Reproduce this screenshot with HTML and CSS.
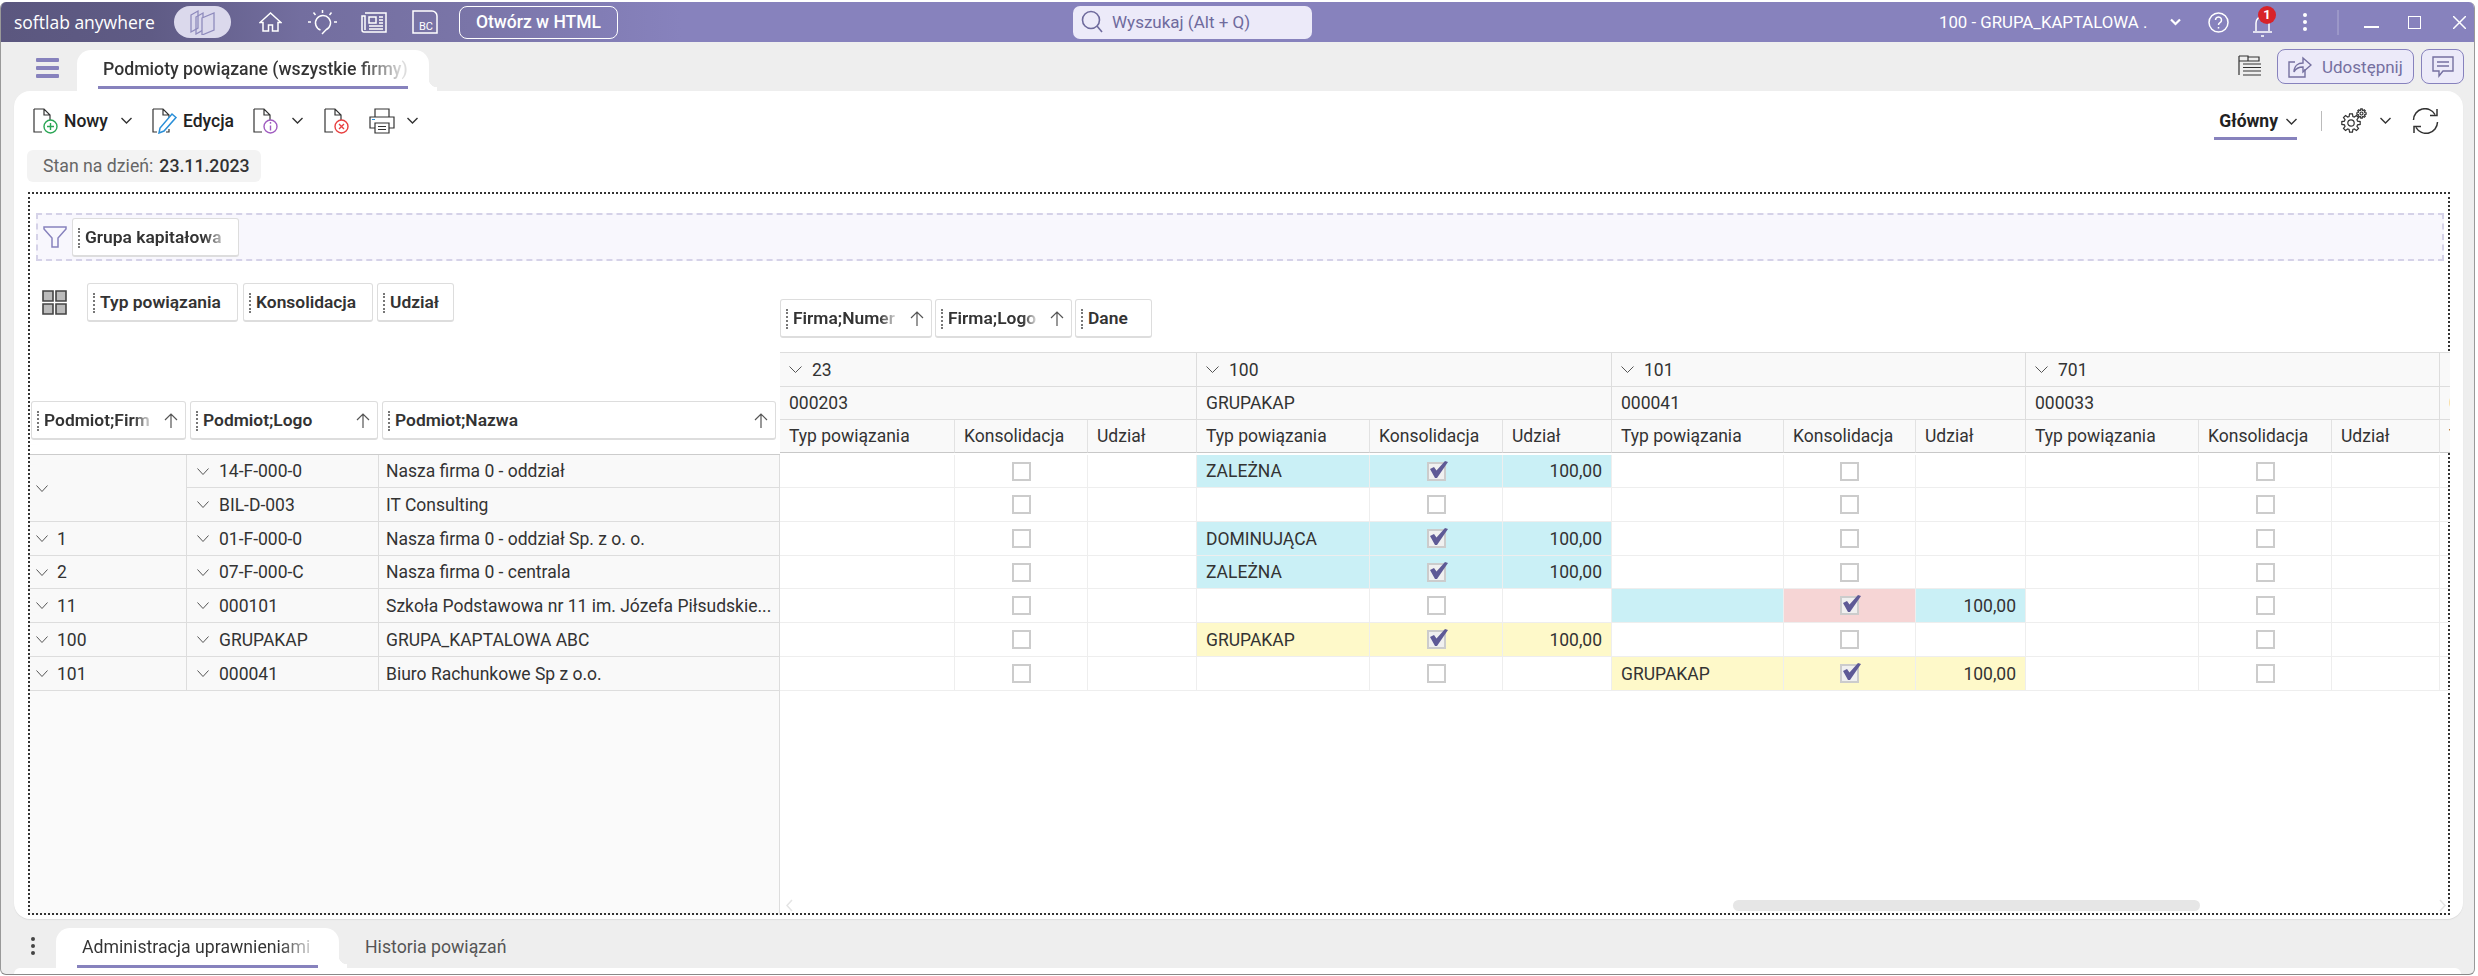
FILE: index.html
```
<!DOCTYPE html>
<html lang="pl">
<head>
<meta charset="utf-8">
<title>Podmioty powiązane</title>
<link rel="stylesheet" href="styles.css">
</head>
<body>
<div class="window">
  <header class="titlebar">
    <span class="brand">softlab anywhere</span>
    <span class="pill"><svg width="26" height="26" viewBox="0 0 26 26" class="ln-pur"><path d="M1 6l7-4v17l-7 4z"/><path d="M6 8l7-4v17l-7 4z"/><path d="M12 9l12-5v17l-12 5z" fill="#dbd9ec"/></svg></span>
    <svg class="t-home ln-w" width="23" height="20" viewBox="0 0 23 20"><path d="M11.5 1L1 10.5h3V19h5.5v-6h4v6H19v-8.5h3z"/></svg>
    <svg class="t-bulb ln-w" width="29" height="26" viewBox="0 0 29 26"><path d="M12.5 21A7.5 7.5 0 1 1 18 20.8L14 25"/><path d="M14.5 1v3M5.5 3.5l2 2.500M23.500 3.500l-2 2.500M0 13h3M26 13h3"/></svg>
    <svg class="t-news ln-w" width="26" height="21" viewBox="0 0 26 21"><path d="M4 1h21v19H3a2 2 0 0 1-2-2V4h3v14"/><path d="M8 5h7v6H8zM18 5h4M18 8h4M18 11h4M8 14h14M8 17h14"/></svg>
    <svg class="t-bc ln-w" width="26" height="24" viewBox="0 0 26 24"><path d="M1 1h19a5 5 0 0 1 5 5v17H1z"/><text x="7" y="20" class="bc-text">BC</text></svg>
    <span class="html-btn">Otwórz w HTML</span>
    <div class="search">
      <svg width="22" height="24" viewBox="0 0 22 24" class="ln-search"><circle cx="10" cy="10" r="8.500"/><path d="M16 16l5 6"/></svg>
      <span>Wyszukaj (Alt + Q)</span>
    </div>
    <span class="company">100 - GRUPA_KAPTALOWA .</span>
    <svg class="t-cchev" width="11" height="8" viewBox="0 0 11 8"><path d="M1 1.500l4.500 4.500 4.500-4.500"/></svg>
    <svg class="t-help ln-w" width="21" height="21" viewBox="0 0 21 21"><circle cx="10.500" cy="10.500" r="9.500"/><path d="M7.500 8a3 3 0 1 1 4.500 2.600c-1 .6-1.500 1.200-1.500 2.400M10.500 15v1.500"/></svg>
    <span class="bell">
      <svg class="ln-w" width="19" height="23" viewBox="0 0 19 23"><path d="M3 17V9a6.500 6.500 0 0 1 13 0v8M0 18h19M8 22h3"/></svg>
      <span class="badge">1</span>
    </span>
    <span class="vdots"><i></i><i></i><i></i></span>
    <span class="t-sep"></span>
    <span class="t-min"></span>
    <span class="t-max"></span>
    <svg class="t-close ln-w" width="13" height="13" viewBox="0 0 13 13"><path d="M0 0l13 13M13 0L0 13"/></svg>
  </header>

  <div class="tabstrip">
    <span class="burger"><i></i><i></i><i></i></span>
    <div class="tab tab-main"><span class="tab-text fade">Podmioty powiązane (wszystkie firmy)</span></div>
    <svg class="flaglist" width="23" height="22" viewBox="0 0 23 22"><path class="dk" d="M1 1v19M1 1h9v5H1M10 2h11v4H10M5 9h18M5 12.500h18M5 16h18M5 20h18"/></svg>
    <span class="share-btn">
      <svg width="24" height="24" viewBox="0 0 24 24" class="ln-mut"><path d="M17 14v8H1V7h6"/><path d="M6 17c0-6 4-9 9-9V3l8 7-8 7v-5c-4 0-7 1-9 5z"/></svg>
      <span>Udostępnij</span>
    </span>
    <span class="comment-btn">
      <svg width="22" height="22" viewBox="0 0 22 22" class="ln-mut"><path d="M1 1h20v14H11l-4 5v-5H1zM5 6h12M5 10h12"/></svg>
    </span>
  </div>

  <main class="panel">
    <div class="toolbar">
      <svg class="i-new" width="25" height="26" viewBox="0 0 25 26"><path class="dk" d="M1 1h10l6 6v5M11 1v6h6M1 1v23h8"/><circle cx="17.500" cy="18.500" r="6.500" fill="#fff" stroke="#2aa655" stroke-width="1.400"/><path d="M17.500 15v7M14 18.500h7" stroke="#2aa655" stroke-width="1.400"/></svg>
      <span class="tb-label tb-nowy">Nowy</span>
      <svg class="chev c-nowy" width="11" height="7" viewBox="0 0 11 7"><path d="M.5 1l5 5 5-5"/></svg>
      <svg class="i-edit" width="26" height="26" viewBox="0 0 26 26"><path class="dk" d="M1 1h10l6 6v4M11 1v6h6M1 1v23h4M14 24h3v-3"/><path d="M20 6l4 3.500L12 23l-5 2 1-5z" fill="#fff" stroke="#2a8fd8" stroke-width="1.500"/></svg>
      <span class="tb-label tb-edycja">Edycja</span>
      <svg class="i-info" width="25" height="26" viewBox="0 0 25 26"><path class="dk" d="M1 1h10l6 6v5M11 1v6h6M1 1v23h8"/><circle cx="17.500" cy="18.500" r="6.500" fill="#fff" stroke="#a05cc0" stroke-width="1.400"/><path d="M17.500 17.500V22.500M17.500 14v1.800" stroke="#a05cc0" stroke-width="1.400"/></svg>
      <svg class="chev c-info" width="11" height="7" viewBox="0 0 11 7"><path d="M.5 1l5 5 5-5"/></svg>
      <svg class="i-del" width="25" height="26" viewBox="0 0 25 26"><path class="dk" d="M1 1h10l6 6v5M11 1v6h6M1 1v23h8"/><circle cx="17.500" cy="18.500" r="6.500" fill="#fff" stroke="#e84040" stroke-width="1.400"/><path d="M15 16l5 5M20 16l-5 5" stroke="#e84040" stroke-width="1.400"/></svg>
      <svg class="i-print" width="26" height="26" viewBox="0 0 26 26"><path class="dk" d="M6 9V1h14v8M6 20H1V9h24v11h-5M6 15h14v10H6zM9 18.500h8M9 21.500h8"/><path d="M3 11.500h3" stroke="#2a8fd8" stroke-width="1.200"/></svg>
      <svg class="chev c-print" width="11" height="7" viewBox="0 0 11 7"><path d="M.5 1l5 5 5-5"/></svg>
      <div class="view">
        <span class="view-name">Główny</span>
        <svg class="chev" width="11" height="7" viewBox="0 0 11 7"><path d="M.5 1l5 5 5-5"/></svg>
      </div>
      <span class="tb-sep"></span>
      <svg class="i-gear dk" width="26" height="25" viewBox="0 0 26 25"><path d="M16.54 13.13L19.19 13.55 19.19 16.45 16.54 16.87 15.95 18.3 17.52 20.47 15.47 22.52 13.3 20.95 11.87 21.54 11.45 24.19 8.55 24.19 8.13 21.54 6.7 20.95 4.53 22.52 2.48 20.47 4.05 18.3 3.46 16.87 .81 16.45 .81 13.55 3.46 13.13 4.05 11.7 2.48 9.53 4.53 7.48 6.7 9.05 8.13 8.46 8.55 5.81 11.45 5.81 11.87 8.46 13.3 9.05 15.47 7.48 17.52 9.53 15.95 11.7z"/><circle cx="10" cy="15" r="3.200"/><path d="M23.77 4.57L25.1 4.78 25.1 6.22 23.77 6.43 23.47 7.15 24.26 8.23 23.23 9.26 22.15 8.47 21.43 8.77 21.22 10.1 19.78 10.1 19.57 8.77 18.85 8.47 17.77 9.26 16.74 8.23 17.53 7.15 17.23 6.43 15.9 6.22 15.9 4.78 17.23 4.57 17.53 3.85 16.74 2.77 17.77 1.74 18.85 2.53 19.57 2.23 19.78 .9 21.22 .9 21.43 2.23 22.15 2.53 23.23 1.74 24.26 2.77 23.47 3.85z"/><circle cx="20.500" cy="5.500" r="1.500"/></svg>
      <svg class="chev c-gear" width="11" height="7" viewBox="0 0 11 7"><path d="M.5 1l5 5 5-5"/></svg>
      <svg class="i-refresh" width="27" height="26" viewBox="0 0 27 26"><path class="dk" d="M1.500 12A11.500 11.500 0 0 1 23 6.500M25 1v6.500h-7M25.500 14A11.500 11.500 0 0 1 4 19.500M2 25v-6.500h7"/></svg>
    </div>

    <div class="asof"><span class="asof-l">Stan na dzień:</span> <span class="asof-v">23.11.2023</span></div>

    <section class="frame">
      <div class="filterbar">
        <svg width="24" height="22" viewBox="0 0 24 22" class="funnel"><path d="M1 1h22v2l-8 9v9H9v-9L1 3z"/></svg>
        <span class="chip chip-grupa"><span class="fade">Grupa kapitałowa</span></span>
      </div>
      <div class="pivot-area">
        <div class="left">
          <div class="data-fields">
            <svg class="gridicon" width="25" height="25" viewBox="0 0 25 25"><path d="M1 1h10v10H1zM14 1h10v10H14zM1 14h10v10H1zM14 14h10v10H14z"/></svg>
            <span class="chip chip-typ">Typ powiązania</span>
            <span class="chip chip-kon">Konsolidacja</span>
            <span class="chip chip-udz">Udział</span>
          </div>
          <div class="col-chips">
            <span class="chip cc1"><span class="fade">Podmiot;Firm</span><svg class="sort" width="14" height="15" viewBox="0 0 14 15"><path d="M7 15V1M1 7l6-6 6 6"/></svg></span>
            <span class="chip cc2">Podmiot;Logo<svg class="sort" width="14" height="15" viewBox="0 0 14 15"><path d="M7 15V1M1 7l6-6 6 6"/></svg></span>
            <span class="chip cc3">Podmiot;Nazwa<svg class="sort" width="14" height="15" viewBox="0 0 14 15"><path d="M7 15V1M1 7l6-6 6 6"/></svg></span>
          </div>
          <div class="rows">
            <div class="rc c1 span2"><svg class="tw" width="12" height="7" viewBox="0 0 12 7"><path d="M.5 .5L6 6.500 11.500 .5"/></svg></div>
            <div class="rc"><svg class="tw" width="12" height="7" viewBox="0 0 12 7"><path d="M.5 .5L6 6.500 11.500 .5"/></svg>14-F-000-0</div>
            <div class="rc name">Nasza firma 0 - oddział</div>
            <div class="rc"><svg class="tw" width="12" height="7" viewBox="0 0 12 7"><path d="M.5 .5L6 6.500 11.500 .5"/></svg>BIL-D-003</div>
            <div class="rc name">IT Consulting</div>
            <div class="rc c1"><svg class="tw" width="12" height="7" viewBox="0 0 12 7"><path d="M.5 .5L6 6.500 11.500 .5"/></svg>1</div>
            <div class="rc"><svg class="tw" width="12" height="7" viewBox="0 0 12 7"><path d="M.5 .5L6 6.500 11.500 .5"/></svg>01-F-000-0</div>
            <div class="rc name">Nasza firma 0 - oddział Sp. z o. o.</div>
            <div class="rc c1"><svg class="tw" width="12" height="7" viewBox="0 0 12 7"><path d="M.5 .5L6 6.500 11.500 .5"/></svg>2</div>
            <div class="rc"><svg class="tw" width="12" height="7" viewBox="0 0 12 7"><path d="M.5 .5L6 6.500 11.500 .5"/></svg>07-F-000-C</div>
            <div class="rc name">Nasza firma 0 - centrala</div>
            <div class="rc c1"><svg class="tw" width="12" height="7" viewBox="0 0 12 7"><path d="M.5 .5L6 6.500 11.500 .5"/></svg>11</div>
            <div class="rc"><svg class="tw" width="12" height="7" viewBox="0 0 12 7"><path d="M.5 .5L6 6.500 11.500 .5"/></svg>000101</div>
            <div class="rc name">Szkoła Podstawowa nr 11 im. Józefa Piłsudskie...</div>
            <div class="rc c1"><svg class="tw" width="12" height="7" viewBox="0 0 12 7"><path d="M.5 .5L6 6.500 11.500 .5"/></svg>100</div>
            <div class="rc"><svg class="tw" width="12" height="7" viewBox="0 0 12 7"><path d="M.5 .5L6 6.500 11.500 .5"/></svg>GRUPAKAP</div>
            <div class="rc name">GRUPA_KAPTALOWA ABC</div>
            <div class="rc c1"><svg class="tw" width="12" height="7" viewBox="0 0 12 7"><path d="M.5 .5L6 6.500 11.500 .5"/></svg>101</div>
            <div class="rc"><svg class="tw" width="12" height="7" viewBox="0 0 12 7"><path d="M.5 .5L6 6.500 11.500 .5"/></svg>000041</div>
            <div class="rc name">Biuro Rachunkowe Sp z o.o.</div>
          </div>
          <div class="left-fill"></div>
        </div>

        <div class="right">
          <div class="col-fields">
            <span class="chip cf1"><span class="fade">Firma;Numer</span><svg class="sort" width="14" height="15" viewBox="0 0 14 15"><path d="M7 15V1M1 7l6-6 6 6"/></svg></span>
            <span class="chip cf2"><span class="fade">Firma;Logo</span><svg class="sort" width="14" height="15" viewBox="0 0 14 15"><path d="M7 15V1M1 7l6-6 6 6"/></svg></span>
            <span class="chip cf3">Dane</span>
          </div>
          <div class="grid">
            <div class="hc g3"><svg class="tw" width="13" height="7" viewBox="0 0 13 7"><path d="M.5 .5L6.500 6.500 12.500 .5"/></svg>23</div>
            <div class="hc g3"><svg class="tw" width="13" height="7" viewBox="0 0 13 7"><path d="M.5 .5L6.500 6.500 12.500 .5"/></svg>100</div>
            <div class="hc g3"><svg class="tw" width="13" height="7" viewBox="0 0 13 7"><path d="M.5 .5L6.500 6.500 12.500 .5"/></svg>101</div>
            <div class="hc g3"><svg class="tw" width="13" height="7" viewBox="0 0 13 7"><path d="M.5 .5L6.500 6.500 12.500 .5"/></svg>701</div>
            <div class="hc"></div>

            <div class="hc g3">000203</div><div class="hc g3">GRUPAKAP</div><div class="hc g3">000041</div><div class="hc g3">000033</div><div class="hc">0</div>

            <div class="hc sub">Typ powiązania</div><div class="hc sub">Konsolidacja</div><div class="hc sub">Udział</div>
            <div class="hc sub">Typ powiązania</div><div class="hc sub">Konsolidacja</div><div class="hc sub">Udział</div>
            <div class="hc sub">Typ powiązania</div><div class="hc sub">Konsolidacja</div><div class="hc sub">Udział</div>
            <div class="hc sub">Typ powiązania</div><div class="hc sub">Konsolidacja</div><div class="hc sub">Udział</div>
            <div class="hc sub">T</div>

            <div class="gap"></div>

            <div class="dc"></div><div class="dc ck"><span class="cb"></span></div><div class="dc"></div>
            <div class="dc blue">ZALEŻNA</div><div class="dc ck blue"><span class="cb on"><svg width="20" height="20" viewBox="0 0 20 20"><path d="M2 8L6 6 8.500 9.500 17 0 20 1 9 17H7z"/></svg></span></div><div class="dc num blue">100,00</div>
            <div class="dc"></div><div class="dc ck"><span class="cb"></span></div><div class="dc"></div>
            <div class="dc"></div><div class="dc ck"><span class="cb"></span></div><div class="dc"></div>
            <div class="dc"></div>

            <div class="dc"></div><div class="dc ck"><span class="cb"></span></div><div class="dc"></div>
            <div class="dc"></div><div class="dc ck"><span class="cb"></span></div><div class="dc"></div>
            <div class="dc"></div><div class="dc ck"><span class="cb"></span></div><div class="dc"></div>
            <div class="dc"></div><div class="dc ck"><span class="cb"></span></div><div class="dc"></div>
            <div class="dc"></div>

            <div class="dc"></div><div class="dc ck"><span class="cb"></span></div><div class="dc"></div>
            <div class="dc blue">DOMINUJĄCA</div><div class="dc ck blue"><span class="cb on"><svg width="20" height="20" viewBox="0 0 20 20"><path d="M2 8L6 6 8.500 9.500 17 0 20 1 9 17H7z"/></svg></span></div><div class="dc num blue">100,00</div>
            <div class="dc"></div><div class="dc ck"><span class="cb"></span></div><div class="dc"></div>
            <div class="dc"></div><div class="dc ck"><span class="cb"></span></div><div class="dc"></div>
            <div class="dc"></div>

            <div class="dc"></div><div class="dc ck"><span class="cb"></span></div><div class="dc"></div>
            <div class="dc blue">ZALEŻNA</div><div class="dc ck blue"><span class="cb on"><svg width="20" height="20" viewBox="0 0 20 20"><path d="M2 8L6 6 8.500 9.500 17 0 20 1 9 17H7z"/></svg></span></div><div class="dc num blue">100,00</div>
            <div class="dc"></div><div class="dc ck"><span class="cb"></span></div><div class="dc"></div>
            <div class="dc"></div><div class="dc ck"><span class="cb"></span></div><div class="dc"></div>
            <div class="dc"></div>

            <div class="dc"></div><div class="dc ck"><span class="cb"></span></div><div class="dc"></div>
            <div class="dc"></div><div class="dc ck"><span class="cb"></span></div><div class="dc"></div>
            <div class="dc blue"></div><div class="dc ck pink"><span class="cb on"><svg width="20" height="20" viewBox="0 0 20 20"><path d="M2 8L6 6 8.500 9.500 17 0 20 1 9 17H7z"/></svg></span></div><div class="dc num blue">100,00</div>
            <div class="dc"></div><div class="dc ck"><span class="cb"></span></div><div class="dc"></div>
            <div class="dc"></div>

            <div class="dc"></div><div class="dc ck"><span class="cb"></span></div><div class="dc"></div>
            <div class="dc yellow">GRUPAKAP</div><div class="dc ck yellow"><span class="cb on"><svg width="20" height="20" viewBox="0 0 20 20"><path d="M2 8L6 6 8.500 9.500 17 0 20 1 9 17H7z"/></svg></span></div><div class="dc num yellow">100,00</div>
            <div class="dc"></div><div class="dc ck"><span class="cb"></span></div><div class="dc"></div>
            <div class="dc"></div><div class="dc ck"><span class="cb"></span></div><div class="dc"></div>
            <div class="dc"></div>

            <div class="dc"></div><div class="dc ck"><span class="cb"></span></div><div class="dc"></div>
            <div class="dc"></div><div class="dc ck"><span class="cb"></span></div><div class="dc"></div>
            <div class="dc yellow">GRUPAKAP</div><div class="dc ck yellow"><span class="cb on"><svg width="20" height="20" viewBox="0 0 20 20"><path d="M2 8L6 6 8.500 9.500 17 0 20 1 9 17H7z"/></svg></span></div><div class="dc num yellow">100,00</div>
            <div class="dc"></div><div class="dc ck"><span class="cb"></span></div><div class="dc"></div>
            <div class="dc"></div>
          </div>
          <svg class="sb-arrow sb-l" width="7" height="13" viewBox="0 0 7 13"><path d="M6 1L1 6.500 6 12"/></svg>
          <span class="sb-thumb"></span>
          <svg class="sb-arrow sb-r" width="7" height="13" viewBox="0 0 7 13"><path d="M1 1l5 5.500L1 12"/></svg>
        </div>
      </div>
    </section>
  </main>

  <div class="bottomtabs">
    <span class="vdots2"><i></i><i></i><i></i></span>
    <div class="tab tab-bottom"><span class="tab-text fade">Administracja uprawnieniami</span></div>
    <span class="tab-plain">Historia powiązań</span>
  </div>
  <div class="footer-panel"></div>
</div>
</body>
</html>
```
FILE: styles.css
```
* { box-sizing: border-box; }
html, body { margin: 0; padding: 0; height: 100%; overflow: hidden; background: #fff; }
body { font-family: Roboto, "Liberation Sans", sans-serif; font-size: 16px; color: #333; }
svg { display: block; flex: none; fill: none; }
i { display: block; }

.ln-w { stroke: #fff; stroke-width: 1.5; }
.dk { stroke: #333; stroke-width: 1.2; }
.ln-pur { stroke: #8f8bbd; stroke-width: 1.3; }
.ln-mut { stroke: #7570a0; stroke-width: 1.4; }
.ln-search { stroke: #6f6b9d; stroke-width: 1.6; }

.window { width: 2475px; height: 973px; margin-top: 2px; display: flex; flex-direction: column; background: #eee; border-left: 1px solid #999; border-right: 1px solid #999; border-bottom: 1px solid #888; border-radius: 6px; overflow: hidden; }

.titlebar { height: 40px; flex: none; display: flex; align-items: center; color: #fff; padding-left: 13px; background: linear-gradient(90deg, #5b577f 0, #5f5b85 150px, #736e9f 300px, #7a75a8 470px, #8782bd 680px); }
.brand { font-family: "Open Sans", Lato, sans-serif; font-size: 17.500px; width: 147px; white-space: nowrap; }
.pill { margin-left: 13px; width: 57px; height: 32px; border-radius: 16px; background: #dbd9ec; display: flex; align-items: center; justify-content: center; }
.t-home { margin-left: 28px; }
.t-bulb { margin-left: 26px; }
.t-news { margin-left: 24px; }
.t-bc { margin-left: 25px; }
.bc-text { font-family: Roboto, sans-serif; font-size: 11px; fill: #fff; stroke: none; }
.html-btn { margin-left: 21px; width: 159px; height: 33px; border: 1.5px solid #fff; border-radius: 8px; display: flex; align-items: center; justify-content: center; font-weight: 500; font-size: 17.500px; color: #fff; }
.search { margin-left: 455px; width: 239px; height: 33px; border-radius: 7px; background: #eceaf9; display: flex; align-items: center; padding-left: 8px; gap: 9px; color: #6f6b9d; font-size: 17px; }
.company { margin-left: 627px; width: 215px; font-size: 16.800px; white-space: nowrap; }
.t-cchev { margin-left: 16px; stroke: #fff; stroke-width: 2.2; }
.t-help { margin-left: 27px; }
.bell { margin-left: 24px; width: 19px; height: 23px; position: relative; margin-top: 6px; }
.badge { position: absolute; left: 5px; top: -8px; width: 18px; height: 18px; border-radius: 50%; background: #d8232a; color: #fff; font-size: 13px; font-weight: 700; display: flex; align-items: center; justify-content: center; }
.vdots { margin-left: 30px; width: 6px; display: flex; flex-direction: column; align-items: center; gap: 3px; }
.vdots i { width: 4px; height: 4px; background: #fff; border-radius: 50%; }
.t-sep { margin-left: 29px; width: 2px; height: 25px; background: #9b97c8; }
.t-min { margin-left: 25px; width: 15px; height: 1.5px; background: #fff; margin-top: 10px; }
.t-max { margin-left: 29px; width: 13px; height: 13px; border: 1.5px solid #fff; }
.t-close { margin-left: 32px; }

.tabstrip { height: 49px; flex: none; display: flex; align-items: flex-end; }
.burger { margin-left: 35px; margin-bottom: 13px; width: 23px; display: flex; flex-direction: column; gap: 4px; }
.burger i { height: 4px; background: #8782bd; border-radius: 1px; }
.tab { position: relative; background: #fff; border-radius: 14px 14px 0 0; }
.tab::after { content: ""; position: absolute; right: -8px; bottom: 0; width: 8px; height: 12px; background: radial-gradient(circle at 100% 0, transparent 8px, #fff 8.5px); }
.tab-main { margin-left: 18px; width: 352px; height: 41px; padding: 0 21px; }
.tab-text { display: block; line-height: 38px; font-size: 17.700px; font-weight: 500; white-space: nowrap; overflow: hidden; border-bottom: 3px solid #8782bd; height: 39px; }
.tab-main .tab-text { padding-left: 5px; }
.fade { -webkit-mask-image: linear-gradient(90deg, #000 85%, rgba(0,0,0,.2) 100%); mask-image: linear-gradient(90deg, #000 85%, rgba(0,0,0,.2) 100%); overflow: hidden; white-space: nowrap; }
.tab-text.fade { -webkit-mask-image: none; mask-image: none; background: linear-gradient(90deg, #333 84%, #ddd 98%); -webkit-background-clip: text; background-clip: text; color: transparent; }
.flaglist { margin-left: auto; margin-bottom: 14px; }
.share-btn { margin-left: 16px; margin-bottom: 7px; width: 137px; height: 35px; border: 1.5px solid #8782bd; border-radius: 8px; background: #eceaf9; display: flex; align-items: center; padding-left: 10px; gap: 10px; color: #7570a0; font-size: 17px; }
.comment-btn { margin-left: 7px; margin-right: 10px; margin-bottom: 7px; width: 43px; height: 35px; border: 1.5px solid #8782bd; border-radius: 8px; background: #eceaf9; display: flex; align-items: center; justify-content: center; }

.panel { height: 828px; flex: none; margin: 0 11px 0 13px; background: #fff; border-radius: 16px; display: flex; flex-direction: column; box-shadow: 0 1px 1px #ddd; }
.toolbar { height: 59px; flex: none; display: flex; align-items: center; padding-left: 19px; }
.tb-label { font-weight: 500; font-size: 17.500px; color: #222; }
.chev { stroke: #333; stroke-width: 1.4; }
.tb-nowy { margin-left: 6px; width: 44px; }
.c-nowy { margin-left: 13px; }
.i-edit { margin-left: 20px; }
.tb-edycja { margin-left: 5px; width: 52px; }
.i-info { margin-left: 18px; }
.c-info { margin-left: 14px; }
.i-del { margin-left: 21px; }
.i-print { margin-left: 20px; }
.c-print { margin-left: 12px; }
.view { margin-left: auto; width: 83px; height: 38px; display: flex; align-items: center; justify-content: flex-end; gap: 8px; border-bottom: 3px solid #8782bd; padding-top: 4px; }
.view-name { font-weight: 700; font-size: 17.500px; color: #222; }
.tb-sep { margin-left: 24px; width: 1px; height: 20px; background: #bbb; }
.i-gear { margin-left: 19px; }
.c-gear { margin-left: 13px; }
.i-refresh { margin-left: 21px; margin-right: 24px; }
.i-refresh .dk { stroke-width: 1.500; }

.asof { margin-left: 13px; width: 234px; height: 32px; flex: none; border-radius: 6px; background: #f3f3f3; display: flex; align-items: center; padding-left: 16px; gap: 6px; font-size: 17.700px; white-space: nowrap; }
.asof-l { color: #666; }
.asof-v { color: #333; font-weight: 500; }

.frame { margin: 10px 13px 4px 14px; flex: 1; min-height: 0; display: flex; flex-direction: column; outline: 2px dotted #333; outline-offset: -2px; position: relative; }
.filterbar { margin: 21px 6px 0 8px; height: 48px; flex: none; border: 2px dashed #d5d2e8; background: #f8f7fd; display: flex; align-items: center; padding-left: 5px; gap: 5px; }
.funnel { stroke: #8782bd; stroke-width: 1.5; }

.chip { height: 39px; border: 1px solid #ddd; border-bottom-width: 2px; border-radius: 3px; background: #fff; display: flex; align-items: center; font-weight: 600; font-size: 17.400px; color: #333; padding-left: 12px; position: relative; white-space: nowrap; flex: none; }
.chip::before { content: ""; position: absolute; left: 5px; top: 9px; height: 20px; border-left: 2px dotted #777; }
.chip-grupa { width: 167px; }
.chip-grupa .fade { width: 140px; }

.pivot-area { flex: 1; min-height: 0; display: flex; }
.left { width: 752px; flex: none; display: flex; flex-direction: column; }
.data-fields { margin-top: 22px; display: flex; align-items: center; padding-left: 14px; }
.gridicon { fill: #bbb; stroke: #444; stroke-width: 1.6; }
.chip-typ { margin-left: 20px; width: 151px; }
.chip-kon { margin-left: 5px; width: 130px; }
.chip-udz { margin-left: 4px; width: 77px; }
.col-chips { margin-top: 79px; display: flex; padding-left: 3px; gap: 4px; }
.sort { stroke: #555; stroke-width: 1.2; margin-left: auto; margin-right: 7px; }
.cc1 { width: 155px; }
.cc2 { width: 188px; }
.cc3 { width: 394px; }
.rows { margin-top: 14px; display: grid; grid-template-columns: 159px 192px 401px; grid-template-rows: 33px 34px 34px 33px 34px 34px 34px; border-top: 1px solid #ccc; background: #f9f9f9; flex: none; }
.rc { display: flex; align-items: center; padding-left: 10px; border-bottom: 1px solid #ddd; border-right: 1px solid #ddd; font-size: 17.500px; color: #333; gap: 10px; white-space: nowrap; min-width: 0; }
.rc.c1 { padding-left: 8px; gap: 9px; }
.rc.name { padding-left: 7px; }
.rc.span2 { grid-row: span 2; }
.tw { stroke: #555; stroke-width: 1; }
.left-fill { flex: 1; background: #fafafa; border-right: 1px solid #ddd; }

.right { flex: 1; min-width: 0; position: relative; overflow: hidden; display: flex; flex-direction: column; }
.col-fields { margin-top: 38px; display: flex; gap: 3px; }
.cf1 { width: 152px; }
.cf2 { width: 137px; }
.cf3 { width: 77px; }
.grid { margin-top: 14px; display: grid; width: 1730px; grid-template-columns: 175px 133px 109px 173px 133px 109px 172px 132px 110px 173px 133px 108px 40px; grid-template-rows: 34px 33px 33px 2px 33px 34px 34px 33px 34px 34px 34px; border-top: 1px solid #ddd; }
.hc { background: #f9f9f9; border-right: 1px solid #ddd; border-bottom: 1px solid #ddd; display: flex; align-items: center; gap: 10px; padding-left: 9px; font-size: 17.500px; color: #333; white-space: nowrap; overflow: hidden; }
.hc.g3 { grid-column: span 3; }
.hc.sub { border-bottom-color: #c8c8c8; border-right-color: #e2e2e2; }
.gap { grid-column: 1 / -1; }
.dc { border-right: 1px solid #eee; border-bottom: 1px solid #eee; display: flex; align-items: center; padding: 0 9px; font-size: 17.500px; color: #333; background-clip: padding-box; white-space: nowrap; }
.ck { justify-content: center; padding: 0; }
.num { justify-content: flex-end; }
.blue { background-color: #caf0f6; }
.yellow { background-color: #fef9c9; }
.pink { background-color: #f6d5d5; }
.cb { width: 19px; height: 19px; border: 2px solid #ccc; background: #fff; position: relative; display: block; }
.cb.on { background: #f0f0f0; }
.cb.on svg { position: absolute; left: -1px; top: -3px; fill: #5e5a96; }

.sb-thumb { position: absolute; left: 953px; bottom: 4px; width: 467px; height: 11px; border-radius: 6px; background: #e6e6e6; }
.sb-arrow { position: absolute; bottom: 3px; stroke: #e4e4e4; stroke-width: 1.5; }
.sb-l { left: 6px; }
.sb-r { right: 4px; }

.bottomtabs { height: 49px; flex: none; display: flex; align-items: flex-end; }
.vdots2 { margin-left: 30px; margin-bottom: 13px; width: 4px; display: flex; flex-direction: column; gap: 3px; }
.vdots2 i { width: 4px; height: 4px; border-radius: 50%; background: #444; }
.tab-bottom { margin-left: 21px; width: 283px; height: 40px; padding: 0 21px; }
.tab-bottom .tab-text { padding-left: 5px; font-weight: 400; height: 40px; }
.tab-plain { margin-left: 26px; margin-bottom: 9px; line-height: 24px; font-size: 17.700px; color: #555; }
.footer-panel { flex: none; height: 6px; margin: 0 13px; background: #fff; border-radius: 6px 6px 0 0; }
```
